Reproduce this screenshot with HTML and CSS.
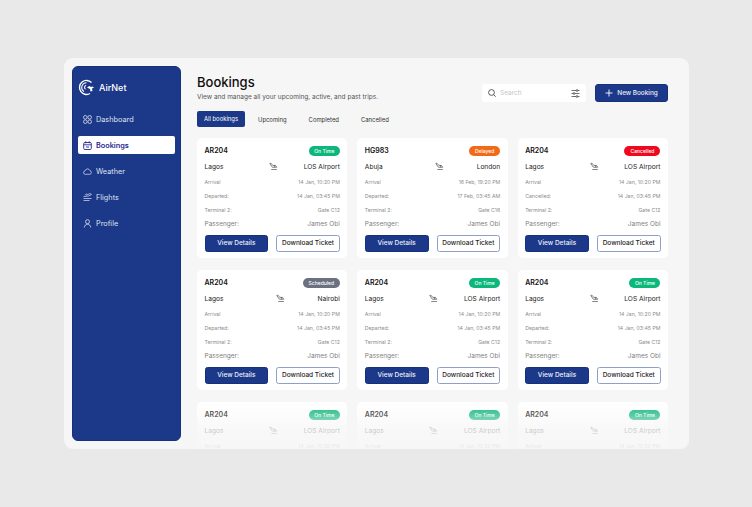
FILE: index.html
```html
<!DOCTYPE html>
<html lang="en">
<head>
    <meta charset="UTF-8">
    <title>Bookings</title>
    <link rel="stylesheet" href="styles.css">
</head>
<body>
    <svg class="defs" width="0" height="0">
        <symbol id="plane" viewBox="0 0 12 12" fill="none" stroke="currentColor" stroke-width="0.8">
            <path d="M1 2l1.500-.5 2.500 3h3.500l1.800 2.500H4.500z"/>
            <path d="M3 10h7.500M7.500 4.500V7"/>
        </symbol>
    </svg>
    <div class="panel">
        <aside class="sidebar">
            <div class="logo">
                <svg width="17" height="17" viewBox="0 0 17 17" fill="none" stroke="#fff">
                    <path d="M13.500 3.500A7 7 0 1 0 12 14.500" stroke-width="1.400"/>
                    <path d="M8.500 3.800A4.700 4.700 0 0 0 6 12.500M8 6.300a2.300 2.300 0 0 0-.5 4" stroke-width="1.100"/>
                    <path d="M9 8.500l2.500-1.500 1.500 1 1.500-.5 1.500 1-2 1 .5 2.500-2 .5-.5-2.500z" fill="#fff" stroke="none"/>
                </svg>
                <span>AirNet</span>
            </div>
            <nav class="nav">
                <a class="nav-item">
                    <svg width="9" height="9" viewBox="0 0 9 9" fill="none" stroke="currentColor" stroke-width=".8">
                        <circle cx="2.300" cy="2.300" r="1.800"/><circle cx="6.700" cy="2.300" r="1.800"/>
                        <circle cx="2.300" cy="6.700" r="1.800"/><circle cx="6.700" cy="6.700" r="1.800"/>
                    </svg>
                    Dashboard
                </a>
                <a class="nav-item active">
                    <svg width="9" height="9" viewBox="0 0 9 9" fill="none" stroke="currentColor" stroke-width=".9">
                        <rect x=".7" y="1.500" width="7.600" height="7" rx="1.200"/>
                        <path d="M.7 3.800h7.600M2.800 .3v2M6.200 .3v2M3 6h3"/>
                    </svg>
                    Bookings
                </a>
                <a class="nav-item">
                    <svg width="9" height="9" viewBox="0 0 9 9" fill="none" stroke="currentColor" stroke-width=".7">
                        <path d="M2.300 7.300a1.700 1.700 0 0 1-.2-3.400 2.500 2.500 0 0 1 4.800-.3 1.900 1.900 0 0 1 0 3.700z"/>
                    </svg>
                    Weather
                </a>
                <a class="nav-item">
                    <svg width="9" height="9" viewBox="0 0 9 9" fill="none" stroke="currentColor" stroke-width=".7">
                        <path d="M.5 3.500l5-.5 3-1.500-1.500-1-2 1-2-.5-.5.500 1 1M.5 5.500h8M.5 7.500h6"/>
                    </svg>
                    Flights
                </a>
                <a class="nav-item">
                    <svg width="9" height="9" viewBox="0 0 9 9" fill="none" stroke="currentColor" stroke-width=".8">
                        <circle cx="4.500" cy="2.700" r="2"/>
                        <path d="M1.300 8.500c.2-2 1.400-3.200 3.200-3.200s3 1.200 3.200 3.200"/>
                    </svg>
                    Profile
                </a>
            </nav>
        </aside>

        <main class="main">
            <header class="top">
                <div>
                    <h1>Bookings</h1>
                    <p class="sub">View and manage all your upcoming, active, and past trips.</p>
                </div>
                <div class="actions">
                    <div class="search">
                        <svg width="8" height="8" viewBox="0 0 8 8" fill="none" stroke="#333" stroke-width=".8">
                            <circle cx="3.500" cy="3.500" r="2.900"/><path d="M5.600 5.600L7.700 7.700"/>
                        </svg>
                        <span class="search-text">Search</span>
                        <svg class="filter" width="9" height="9" viewBox="0 0 9 9" fill="none" stroke="#333" stroke-width=".7">
                            <path d="M.5 1.500h8M.5 4.500h8M.5 7.500h8"/>
                            <circle cx="6" cy="1.500" r=".9" fill="#fff"/><circle cx="3" cy="4.500" r=".9" fill="#fff"/><circle cx="6" cy="7.500" r=".9" fill="#fff"/>
                        </svg>
                    </div>
                    <button class="new-btn">
                        <svg width="8" height="8" viewBox="0 0 8 8" stroke="#fff" stroke-width=".9"><path d="M4 .5v7M.5 4h7"/></svg>
                        New Booking
                    </button>
                </div>
            </header>

            <div class="tabs">
                <a class="tab active">All bookings</a>
                <a class="tab">Upcoming</a>
                <a class="tab">Completed</a>
                <a class="tab">Cancelled</a>
            </div>

            <div class="grid">
                <div class="card">
                    <div class="card-head"><b>AR204</b><span class="badge green">On Time</span></div>
                    <div class="route"><span>Lagos</span><svg class="plane"><use href="#plane"/></svg><span>LOS Airport</span></div>
                    <div class="row"><span>Arrival</span><span>14 Jan, 10:20 PM</span></div>
                    <div class="row"><span>Departed:</span><span>14 Jan, 03:45 PM</span></div>
                    <div class="row"><span>Terminal 2:</span><span>Gate C12</span></div>
                    <div class="row big"><span>Passenger:</span><span>James Obi</span></div>
                    <div class="btns"><a class="btn solid">View Details</a><a class="btn outline">Download Ticket</a></div>
                </div>
                <div class="card">
                    <div class="card-head"><b>HG983</b><span class="badge orange">Delayed</span></div>
                    <div class="route"><span>Abuja</span><svg class="plane"><use href="#plane"/></svg><span>London</span></div>
                    <div class="row"><span>Arrival</span><span>16 Feb, 19:20 PM</span></div>
                    <div class="row"><span>Departed:</span><span>17 Feb, 03:45 AM</span></div>
                    <div class="row"><span>Terminal 2:</span><span>Gate C16</span></div>
                    <div class="row big"><span>Passenger:</span><span>James Obi</span></div>
                    <div class="btns"><a class="btn solid">View Details</a><a class="btn outline">Download Ticket</a></div>
                </div>
                <div class="card">
                    <div class="card-head"><b>AR204</b><span class="badge red">Cancelled</span></div>
                    <div class="route"><span>Lagos</span><svg class="plane"><use href="#plane"/></svg><span>LOS Airport</span></div>
                    <div class="row"><span>Arrival</span><span>14 Jan, 10:20 PM</span></div>
                    <div class="row"><span>Cancelled:</span><span>14 Jan, 03:45 PM</span></div>
                    <div class="row"><span>Terminal 2:</span><span>Gate C12</span></div>
                    <div class="row big"><span>Passenger:</span><span>James Obi</span></div>
                    <div class="btns"><a class="btn solid">View Details</a><a class="btn outline">Download Ticket</a></div>
                </div>
                <div class="card">
                    <div class="card-head"><b>AR204</b><span class="badge gray">Scheduled</span></div>
                    <div class="route"><span>Lagos</span><svg class="plane"><use href="#plane"/></svg><span>Nairobi</span></div>
                    <div class="row"><span>Arrival</span><span>14 Jan, 10:20 PM</span></div>
                    <div class="row"><span>Departed:</span><span>14 Jan, 03:45 PM</span></div>
                    <div class="row"><span>Terminal 2:</span><span>Gate C12</span></div>
                    <div class="row big"><span>Passenger:</span><span>James Obi</span></div>
                    <div class="btns"><a class="btn solid">View Details</a><a class="btn outline">Download Ticket</a></div>
                </div>
                <div class="card">
                    <div class="card-head"><b>AR204</b><span class="badge green">On Time</span></div>
                    <div class="route"><span>Lagos</span><svg class="plane"><use href="#plane"/></svg><span>LOS Airport</span></div>
                    <div class="row"><span>Arrival</span><span>14 Jan, 10:20 PM</span></div>
                    <div class="row"><span>Departed:</span><span>14 Jan, 03:45 PM</span></div>
                    <div class="row"><span>Terminal 2:</span><span>Gate C12</span></div>
                    <div class="row big"><span>Passenger:</span><span>James Obi</span></div>
                    <div class="btns"><a class="btn solid">View Details</a><a class="btn outline">Download Ticket</a></div>
                </div>
                <div class="card">
                    <div class="card-head"><b>AR204</b><span class="badge green">On Time</span></div>
                    <div class="route"><span>Lagos</span><svg class="plane"><use href="#plane"/></svg><span>LOS Airport</span></div>
                    <div class="row"><span>Arrival</span><span>14 Jan, 10:20 PM</span></div>
                    <div class="row"><span>Departed:</span><span>14 Jan, 03:45 PM</span></div>
                    <div class="row"><span>Terminal 2:</span><span>Gate C12</span></div>
                    <div class="row big"><span>Passenger:</span><span>James Obi</span></div>
                    <div class="btns"><a class="btn solid">View Details</a><a class="btn outline">Download Ticket</a></div>
                </div>
                <div class="card">
                    <div class="card-head"><b>AR204</b><span class="badge green">On Time</span></div>
                    <div class="route"><span>Lagos</span><svg class="plane"><use href="#plane"/></svg><span>LOS Airport</span></div>
                    <div class="row"><span>Arrival</span><span>14 Jan, 10:20 PM</span></div>
                </div>
                <div class="card">
                    <div class="card-head"><b>AR204</b><span class="badge green">On Time</span></div>
                    <div class="route"><span>Lagos</span><svg class="plane"><use href="#plane"/></svg><span>LOS Airport</span></div>
                    <div class="row"><span>Arrival</span><span>14 Jan, 10:20 PM</span></div>
                </div>
                <div class="card">
                    <div class="card-head"><b>AR204</b><span class="badge green">On Time</span></div>
                    <div class="route"><span>Lagos</span><svg class="plane"><use href="#plane"/></svg><span>LOS Airport</span></div>
                    <div class="row"><span>Arrival</span><span>14 Jan, 10:20 PM</span></div>
                </div>
            </div>
            <div class="fade"></div>
        </main>
    </div>
</body>
</html>
```

FILE: styles.css
```css
* {
    box-sizing: border-box;
}
body {
    margin: 0;
    height: 507px;
    overflow: hidden;
    background: #e9e9e9;
    font-family: "Inter", "Liberation Sans", sans-serif;
    color: #111;
}
.defs {
    position: absolute;
}
.panel {
    display: flex;
    gap: 16px;
    width: 625px;
    height: 391px;
    margin: 58px 0 0 64px;
    padding: 8px 21px 8px 8px;
    background: #f6f6f6;
    border-radius: 9px;
    overflow: hidden;
}

/* sidebar */
.sidebar {
    flex: 0 0 109px;
    padding: 12px 5px;
    background: #1c3888;
    border: 1px solid #16307c;
    border-radius: 6px;
    color: #fff;
}
.logo {
    display: flex;
    align-items: center;
    gap: 4px;
    font-size: 9px;
    font-weight: 500;
    margin-bottom: 14px;
}
.nav {
    display: flex;
    flex-direction: column;
    gap: 8px;
}
.nav-item {
    display: flex;
    align-items: center;
    gap: 4px;
    height: 18px;
    padding-left: 5px;
    border-radius: 2px;
    font-size: 7.300px;
    color: #dfe3f0;
}
.nav-item.active {
    background: #fff;
    color: #27278f;
    font-weight: 600;
}

/* header */
.main {
    position: relative;
    flex: 1;
    min-width: 0;
}
.top {
    display: flex;
    justify-content: space-between;
    height: 37px;
    padding-top: 8px;
}
h1 {
    margin: 0;
    font-size: 13px;
    line-height: 16px;
    font-weight: 500;
    color: #0d0d0d;
}
.sub {
    margin: 3px 0 0;
    font-size: 6.500px;
    line-height: 9px;
    color: #555;
}
.actions {
    display: flex;
    gap: 9px;
    padding-top: 10px;
}
.search {
    display: flex;
    align-items: center;
    gap: 4px;
    width: 104px;
    height: 18px;
    padding: 0 6px;
    background: #fff;
    border-radius: 3px;
}
.search-text {
    flex: 1;
    font-size: 6.500px;
    color: #c4c4c4;
}
.new-btn {
    display: flex;
    align-items: center;
    justify-content: center;
    gap: 4px;
    width: 73px;
    height: 18px;
    padding: 0;
    background: #1c3888;
    border: 1px solid #16307c;
    border-radius: 3px;
    color: #eef0f8;
    font-family: inherit;
    font-size: 6.400px;
    font-weight: 500;
}

/* tabs */
.tabs {
    display: flex;
    align-items: center;
    gap: 22px;
    height: 16px;
    margin: 8px 0 11px;
    font-size: 5.900px;
    color: #333;
}
.tabs .tab.active {
    width: 48px;
    height: 16px;
    margin-right: -9px;
    background: #1c3888;
    border-radius: 2px;
    color: #fff;
    line-height: 16px;
    text-align: center;
}

/* cards */
.grid {
    display: grid;
    grid-template-columns: repeat(3, 1fr);
    grid-auto-rows: 120px;
    gap: 12px 10px;
}
.card {
    padding: 7px 7.500px 6px;
    background: #fff;
    border-radius: 5px;
}
.card-head {
    display: flex;
    align-items: center;
    justify-content: space-between;
    height: 11px;
    font-size: 7px;
}
.card-head b {
    font-weight: 600;
}
.badge {
    width: 31px;
    height: 10px;
    border-radius: 5px;
    color: #fff;
    font-size: 5px;
    font-weight: 500;
    line-height: 10px;
    text-align: center;
}
.badge.green { background: #0cb77c; }
.badge.orange { background: #f26a16; }
.badge.red { background: #f0091e; width: 36px; }
.badge.gray { background: #6b7180; width: 37px; }
.route {
    display: flex;
    align-items: center;
    justify-content: space-between;
    height: 11px;
    margin-top: 5px;
    font-size: 6.600px;
    color: #222;
}
.plane {
    width: 9px;
    height: 9px;
    margin-left: 20px;
    color: #333;
}
.row {
    display: flex;
    justify-content: space-between;
    height: 14px;
    font-size: 5.200px;
    line-height: 14px;
    color: #8c8c8c;
}
.route + .row {
    margin-top: 3px;
}
.row.big {
    font-size: 6.500px;
    color: #808080;
}
.btns {
    display: flex;
    gap: 8px;
    margin-top: 4px;
}
.btn {
    flex: 1;
    height: 17px;
    border-radius: 2.500px;
    font-size: 6.500px;
    font-weight: 500;
    line-height: 15px;
    text-align: center;
    border: 1px solid #16307c;
}
.btn.solid {
    background: #1c3888;
    color: #f0f2fa;
}
.btn.outline {
    background: #fff;
    border-color: #8f9fca;
    color: #222;
}
.fade {
    position: absolute;
    left: -4px;
    right: -21px;
    bottom: -8px;
    height: 47px;
    background: linear-gradient(to bottom, rgba(246, 246, 246, 0) 0%, rgba(246, 246, 246, .3) 26%, rgba(246, 246, 246, .78) 60%, rgba(246, 246, 246, .88) 100%);
}
```
